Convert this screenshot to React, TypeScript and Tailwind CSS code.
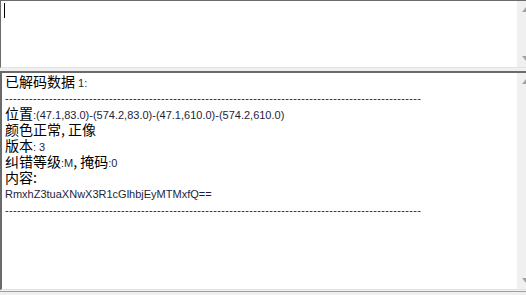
import React from "react";

const cjk = { fontFamily: '"Noto Sans CJK SC", "Noto Sans", sans-serif' };

function ScrollBar() {
  return (
    <div className="flex w-[17px] shrink-0 flex-col justify-between bg-[#f0f0f0]">
      <div className="flex h-[17px] items-center justify-center">
        <svg width="8" height="5" viewBox="0 0 8 5">
          <polygon points="0,5 4,0 8,5" fill="#a3a3a3" />
        </svg>
      </div>
      <div className="flex h-[17px] items-center justify-center">
        <svg width="8" height="5" viewBox="0 0 8 5">
          <polygon points="0,0 8,0 4,5" fill="#a3a3a3" />
        </svg>
      </div>
    </div>
  );
}

function Han({ children }: { children: React.ReactNode }) {
  return (
    <span className="whitespace-pre text-[14px] leading-[15px] text-black" style={cjk}>
      {children}
    </span>
  );
}

// small latin runs; tight leading keeps them inside the 16px row
function Lat({ children }: { children: React.ReactNode }) {
  return (
    <span className="whitespace-pre font-['Liberation_Sans',Arial,sans-serif] text-[11px] leading-[11px] text-[#1e1e3c]">
      {children}
    </span>
  );
}

function Row({ children }: { children: React.ReactNode }) {
  return <div className="flex h-[16px] items-baseline">{children}</div>;
}

function Dashes() {
  return (
    <div className="h-[16px] whitespace-nowrap font-['Liberation_Sans',Arial,sans-serif] text-[11px] leading-[16px] tracking-[0.34px] text-[#2a2220]">
      {"-".repeat(104)}
    </div>
  );
}

export default function App() {
  return (
    <div className="h-[295px] w-[526px] overflow-hidden bg-[#f0f0f0]">
      {/* input box */}
      <div className="flex h-[68px] w-[534px] border-t border-l border-[#6b6b6b] border-b border-b-[#e3e3e3] bg-white">
        <div className="flex-1 pl-[3px] pt-[2px]">
          <div className="h-[15px] w-px bg-black" />
        </div>
        <ScrollBar />
      </div>

      <div className="h-[3px]" />

      {/* result box */}
      <div className="flex h-[219px] w-[534px] border-t-2 border-l-2 border-t-[#6b6b6b] border-l-[#6b6b6b] border-b border-b-[#e3e3e3] bg-white">
        <div className="flex-1 pl-[3px] pt-px">
          <Row>
            <Han>已解码数据</Han>
            <Lat> 1:</Lat>
          </Row>
          <Dashes />
          <Row>
            <Han>位置</Han>
            <Lat>:(47.1,83.0)-(574.2,83.0)-(47.1,610.0)-(574.2,610.0)</Lat>
          </Row>
          <Row>
            <Han>颜色正常, 正像</Han>
          </Row>
          <Row>
            <Han>版本</Han>
            <Lat>: 3</Lat>
          </Row>
          <Row>
            <Han>纠错等级</Han>
            <Lat>:M</Lat>
            <Han>, 掩码</Han>
            <Lat>:0</Lat>
          </Row>
          <Row>
            <Han>内容:</Han>
          </Row>
          <div className="flex h-[16px] items-center">
            <Lat>RmxhZ3tuaXNwX3R1cGlhbjEyMTMxfQ==</Lat>
          </div>
          <Dashes />
        </div>
        <ScrollBar />
      </div>

      <div className="mt-px h-[3px] border-t border-[#a0a0a0]" />
    </div>
  );
}
